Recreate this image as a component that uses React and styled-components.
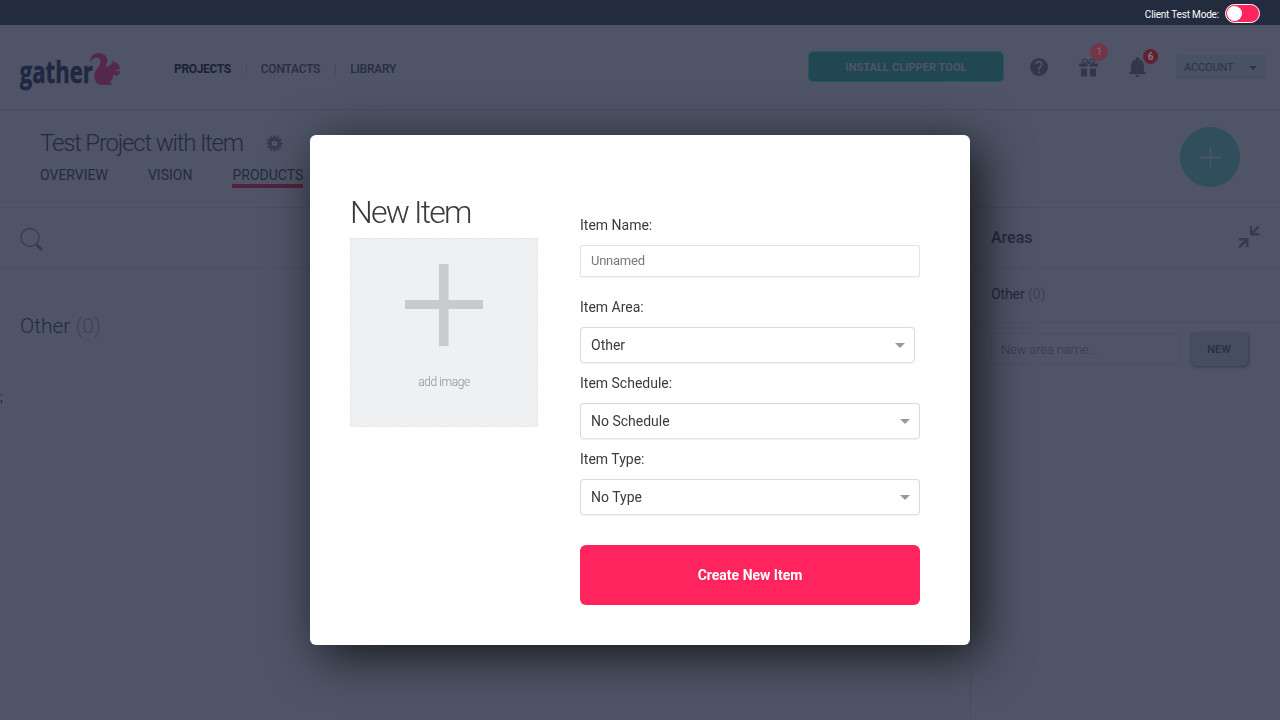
import React from "react";
import styled, { createGlobalStyle } from "styled-components";

const Global = createGlobalStyle`
  *, *::before, *::after { box-sizing: border-box; }
  body { margin: 0; background: #4f5567; font-family: Roboto, sans-serif; overflow: hidden; }
  button, input { font-family: inherit; margin: 0; }
`;

const Page = styled.div`
  width: 1280px;
  height: 720px;
  display: flex;
  flex-direction: column;
  background: #4f5567;
  color: #232b3e;
  overflow: hidden;
`;

const TestBar = styled.div`
  height: 25px;
  flex: none;
  display: flex;
  align-items: center;
  justify-content: flex-end;
  gap: 6px;
  padding: 2px 20px 0 0;
  background: #232b3e;
  color: #fff;
  font-size: 10px;
  letter-spacing: -0.18px;
`;

const TestLabel = styled.span`
  padding-top: 2px;
`;

const Toggle = styled.span`
  width: 35px;
  height: 19px;
  padding: 1px;
  border: 1px solid #fff;
  border-radius: 10px;
  background: #ff245e;
  &::before {
    content: "";
    display: block;
    width: 15px;
    height: 15px;
    border-radius: 50%;
    background: #fff;
  }
`;

const Header = styled.header`
  height: 85px;
  flex: none;
  display: flex;
  align-items: center;
  padding: 0 14px 0 20px;
  border-bottom: 1px solid #484e60;
`;

const Logo = styled.svg`
  width: 102px;
  height: 42px;
  margin-top: 7px;
`;

const Nav = styled.nav`
  display: flex;
  align-items: center;
  margin: 3px auto 0 52px;
  font-size: 12px;
`;

const NavLink = styled.a`
  color: ${(p) => (p.$active ? "#1a2135" : "#272e41")};
  font-weight: ${(p) => (p.$active ? 700 : 500)};
  letter-spacing: ${(p) => (p.$active ? "-0.35px" : "-0.23px")};
  & + & {
    margin-left: 15px;
    padding-left: 15px;
    background: linear-gradient(#454b5d, #454b5d) 0 2px / 1px 11px no-repeat;
  }
`;

const ClipperButton = styled.button`
  width: 196px;
  height: 31px;
  margin: -1px 26px 0 0;
  padding: 1px 0 0;
  border: 1px solid #27565c;
  border-radius: 5px;
  background: #214852;
  color: #4f5567;
  font-size: 11px;
  font-weight: 700;
  letter-spacing: 0.06px;
`;

const HeaderIcon = styled.span`
  position: relative;
  display: flex;
  margin-right: ${(p) => p.$gap}px;
  color: #323849;
`;

const Badge = styled.span`
  position: absolute;
  left: ${(p) => p.$left}px;
  top: ${(p) => p.$top}px;
  width: ${(p) => p.$size}px;
  height: ${(p) => p.$size}px;
  display: flex;
  align-items: center;
  justify-content: center;
  border-radius: 50%;
  background: ${(p) => p.$color};
  color: ${(p) => p.$text};
  font-size: 10px;
  font-weight: 700;
`;

const Account = styled.button`
  width: 90px;
  height: 24px;
  display: flex;
  align-items: center;
  justify-content: space-between;
  padding: 1px 9px 0 8px;
  border: 0;
  border-radius: 2px;
  background: #495164;
  color: #2b3346;
  font-size: 11px;
  letter-spacing: -0.15px;
`;

const ProjectBar = styled.section`
  height: 98px;
  flex: none;
  display: flex;
  align-items: flex-start;
  justify-content: space-between;
  padding: 17px 40px 0 40px;
  border-bottom: 1px solid #495062;
`;

const TitleRow = styled.div`
  display: flex;
  align-items: center;
  gap: 23px;
  height: 33px;
`;

const Title = styled.h1`
  margin: 0;
  font-size: 24px;
  font-weight: 300;
  line-height: 33px;
  letter-spacing: -1.2px;
`;

const Tabs = styled.div`
  display: flex;
  gap: 40px;
  margin-top: 6px;
`;

const Tab = styled.a`
  height: 22px;
  font-size: 14px;
  line-height: 18px;
  border-bottom: 4px solid ${(p) => (p.$active ? "#54213a" : "transparent")};
`;

const AddButton = styled.button`
  width: 60px;
  height: 60px;
  display: flex;
  align-items: center;
  justify-content: center;
  padding: 0;
  border: 0;
  border-radius: 50%;
  background: #304e5b;
  color: #4b5768;
`;

const Body = styled.div`
  flex: 1;
  display: grid;
  grid-template-columns: 970px 310px;
`;

const Products = styled.main`
  display: flex;
  flex-direction: column;
`;

const SearchBar = styled.div`
  height: 60px;
  padding: 19px 20px 0;
  border-bottom: 1px solid #495163;
`;

const GroupTitle = styled.h2`
  margin: 44px 0 0 20px;
  font-size: 21px;
  font-weight: 300;
  line-height: 28px;
`;

const Count = styled.span`
  color: #3b4255;
`;

const Stray = styled.div`
  margin-top: 49px;
  font-size: 14px;
  line-height: 16px;
`;

const Sidebar = styled.aside`
  border-left: 1px solid #494f61;
`;

const SideHeader = styled.div`
  height: 60px;
  display: flex;
  align-items: center;
  justify-content: space-between;
  padding: 0 20px 1px;
  border-bottom: 1px solid #495163;
  font-size: 16px;
  font-weight: 500;
`;

const SideRow = styled.div`
  height: 55px;
  padding: 0 20px;
  border-bottom: 1px solid #495163;
  font-size: 14px;
  font-weight: 400;
  line-height: 53px;
  letter-spacing: -0.1px;
`;

const NewArea = styled.form`
  display: flex;
  gap: 9px;
  padding: 9px 20px;
`;

const AreaInput = styled.input`
  width: 190px;
  height: 32px;
  margin-top: 1px;
  padding: 0 9px;
  border: 1px solid #4a5062;
  border-radius: 2px;
  background: transparent;
  font-size: 13px;
  font-weight: 300;
  letter-spacing: -0.15px;
  &::placeholder { color: #333a4c; opacity: 1; }
`;

const NewButton = styled.button`
  width: 58px;
  height: 34px;
  padding: 0;
  border: 0;
  border-radius: 5px;
  background: #474d60;
  box-shadow: 1px 1px 3px #353b4d;
  color: #2b3347;
  font-size: 11px;
  font-weight: 700;
`;

const Overlay = styled.div`
  position: fixed;
  inset: 0;
  display: grid;
  justify-items: center;
  align-items: start;
  padding-top: 135px;
`;

const Dialog = styled.div`
  width: 660px;
  height: 510px;
  display: grid;
  grid-template-columns: 188px 340px;
  column-gap: 42px;
  align-content: start;
  padding: 60px 50px 40px 40px;
  border-radius: 6px;
  background: #fff;
  box-shadow: 10px 10px 50px rgba(0, 0, 0, 0.75);
  color: #3a3b3f;
`;

const DialogTitle = styled.h2`
  margin: 0 0 8px;
  font-size: 32px;
  font-weight: 300;
  line-height: 35px;
  letter-spacing: -1.8px;
`;

const ImageDrop = styled.div`
  width: 188px;
  height: 189px;
  display: flex;
  flex-direction: column;
  align-items: center;
  padding-top: 25px;
  border: 1px dashed #e5e6e8;
  background: #eff0f2;
  color: #8f9092;
  font-size: 12px;
  font-weight: 300;
  line-height: 16px;
  letter-spacing: -0.4px;
  svg { margin-bottom: 27px; }
`;

const Fields = styled.div`
  display: flex;
  flex-direction: column;
`;

const Field = styled.label`
  display: block;
  height: ${(p) => p.$height}px;
  padding-top: ${(p) => p.$top}px;
  font-size: 14px;
  line-height: 20px;
`;

const NameInput = styled.input`
  display: block;
  width: 340px;
  height: 32px;
  margin-top: 10px;
  padding: 0 10px 1px;
  border: 1px solid #e4e4e4;
  border-radius: 2px;
  color: #37383c;
  font-size: 13px;
  letter-spacing: -0.25px;
  box-shadow: 0 1px 0 #f6f6f6;
  &::placeholder { color: #77787b; opacity: 1; }
`;

const Select = styled.span`
  width: ${(p) => p.$width}px;
  height: 36px;
  margin-top: 10px;
  display: flex;
  align-items: center;
  justify-content: space-between;
  padding: 0 9px 0 10px;
  border: 1px solid #d9d9d9;
  border-bottom-color: #e2e2e2;
  border-radius: 4px;
  box-shadow: 0 1px 0 #f2f2f2;
`;

const Caret = styled.i`
  border: ${(p) => p.$size}px solid transparent;
  border-top-color: ${(p) => p.$color};
  border-bottom: 0;
`;

const CreateButton = styled.button`
  width: 340px;
  height: 60px;
  margin-top: 30px;
  border: 0;
  border-radius: 6px;
  background: #ff245e;
  color: #fff;
  font-size: 14px;
  font-weight: 700;
`;

const TOOTH_ANGLES = [0, 30, 60, 90, 120, 150];

function Gear() {
  return (
    <svg width="17" height="17" viewBox="-8.5 -8.5 17 17">
      <g fill="#363d50">
        {TOOTH_ANGLES.map((a) => (
          <rect key={a} x="-1.2" y="-8" width="2.4" height="16" transform={`rotate(${a})`} />
        ))}
        <circle r="5.6" />
      </g>
      <circle r="2.8" fill="#4f5567" />
    </svg>
  );
}

function GatherLogo() {
  return (
    <Logo viewBox="20 50 102 42">
      <text x="19.8" y="82.6" fontFamily="Open Sans, sans-serif" fontWeight="700" fontSize="29.5" textLength="73" lengthAdjust="spacingAndGlyphs" fill="#202740" stroke="#202740" strokeWidth=".6">gather</text>
      <path
        transform="translate(0 30) scale(.33333)"
        fill="#54284c"
        d="M270 97C270 80 280 69 296 69C313 69 323 80 322 94C321 101 315 106 317 110C321 111 325 109 330 106C335 103 338 95 340 90L344 97C351 99 356 102 357 108L361 115C359 119 353 119 347 121L347 124L359 123L360 127L357 134L348 137L339 133C341 143 337 151 328 157C334 157 336 161 335 165L307 165C293 164 284 155 283 141C281 119 304 108 301 91C299 81 286 82 280 86C275 90 274 93 270 97Z"
      />
    </Logo>
  );
}

export default function App() {
  return (
    <>
      <Global />
      <Page>
        <TestBar><TestLabel>Client Test Mode:</TestLabel><Toggle /></TestBar>
        <Header>
          <GatherLogo />
          <Nav>
            <NavLink $active>PROJECTS</NavLink>
            <NavLink>CONTACTS</NavLink>
            <NavLink>LIBRARY</NavLink>
          </Nav>
          <ClipperButton>INSTALL CLIPPER TOOL</ClipperButton>
          <HeaderIcon $gap={31}>
            <svg width="18" height="18" viewBox="2 2 20 20" fill="currentColor">
              <path d="M12 2a10 10 0 1 0 0 20 10 10 0 0 0 0-20zm1 17h-2v-2h2zm2.07-7.75-.9.92C13.45 12.9 13 13.5 13 15h-2v-.5c0-1.1.45-2.1 1.17-2.83l1.24-1.26c.37-.36.59-.86.59-1.41a2 2 0 1 0-4 0H8a4 4 0 1 1 8 0c0 .88-.36 1.68-.93 2.25z" />
            </svg>
          </HeaderIcon>
          <HeaderIcon $gap={31}>
            <svg width="19" height="19" viewBox="0 0 19 19" fill="currentColor">
              <path d="M0 5.5H8.5V8.500H0zM10.5 5.5H19V8.500H10.5zM2 10.500H8V18.500H2zM11 10.500H17V18.500H11z" />
              <path d="M9.5 5.1C7 5.3 3 5.1 3.4 2.5C4 -.1 8.5 .7 9.5 5.1C10.500 .7 15 -.1 15.600 2.500C16 5.100 12 5.300 9.500 5.100Z" fill="none" stroke="currentColor" strokeWidth="1.2" />
            </svg>
            <Badge $left={11} $top={-15} $size={18} $color="#713649" $text="#8a5b6a">1</Badge>
          </HeaderIcon>
          <HeaderIcon $gap={30}>
            <svg width="17" height="20" viewBox="4 2.500 16 19.500" preserveAspectRatio="none" fill="currentColor">
              <path d="M12 22a2 2 0 0 0 2-2h-4a2 2 0 0 0 2 2zm6-6v-5c0-3.070-1.640-5.640-4.500-6.320V4a1.500 1.500 0 0 0-3 0v.680C7.630 5.360 6 7.920 6 11v5l-2 2v1h16v-1z" />
            </svg>
            <Badge $left={14} $top={-8} $size={15} $color="#622034" $text="#817485">6</Badge>
          </HeaderIcon>
          <Account>ACCOUNT <Caret $size={4} $color="#2b3346" /></Account>
        </Header>

        <ProjectBar>
          <div>
            <TitleRow>
              <Title>Test Project with Item</Title>
              <Gear />
            </TitleRow>
            <Tabs>
              <Tab>OVERVIEW</Tab>
              <Tab>VISION</Tab>
              <Tab $active>PRODUCTS</Tab>
            </Tabs>
          </div>
          <AddButton>
            <svg width="21" height="21" viewBox="0 0 21 21" stroke="currentColor" strokeWidth="1.400">
              <path d="M10.500 0V21M0 10.500H21" />
            </svg>
          </AddButton>
        </ProjectBar>

        <Body>
          <Products>
            <SearchBar>
              <svg width="24" height="24" viewBox="0 0 24 24" fill="none" stroke="#343c4f">
                <circle cx="10" cy="10.500" r="9" strokeWidth="1.300" />
                <path d="M16 17L22 23" strokeWidth="2.600" />
              </svg>
            </SearchBar>
            <GroupTitle>Other <Count>(0)</Count></GroupTitle>
            <Stray>;</Stray>
          </Products>
          <Sidebar>
            <SideHeader>
              Areas
              <svg width="22" height="22" viewBox="0 0 22 22" fill="#343c4f">
                <path d="M12 0H14V5.500L19.500 0L21.500 1.500L16 7H21.500V9.500H12zM1 12H10.500V21H8V16.500L2 22L.300 20.500L6 14.500H1z" />
              </svg>
            </SideHeader>
            <SideRow>Other <Count>(0)</Count></SideRow>
            <NewArea>
              <AreaInput placeholder="New area name..." />
              <NewButton type="button">NEW</NewButton>
            </NewArea>
          </Sidebar>
        </Body>
      </Page>

      <Overlay>
        <Dialog>
          <div>
            <DialogTitle>New Item</DialogTitle>
            <ImageDrop>
              <svg width="78" height="83" viewBox="0 0 78 83" fill="#c9cacc">
                <path d="M34 0H43.500V36H78V45H43.500V82H34V45H0V36H34z" />
              </svg>
              add image
            </ImageDrop>
          </div>
          <Fields>
            <Field $height={92} $top={20}>Item Name:<NameInput placeholder="Unnamed" /></Field>
            <Field $height={86} $top={10}>Item Area:<Select $width={335}>Other<Caret $size={5} $color="#999" /></Select></Field>
            <Field $height={76} $top={0}>Item Schedule:<Select $width={340}>No Schedule<Caret $size={5} $color="#999" /></Select></Field>
            <Field $height={66} $top={0}>Item Type:<Select $width={340}>No Type<Caret $size={5} $color="#999" /></Select></Field>
            <CreateButton>Create New Item</CreateButton>
          </Fields>
        </Dialog>
      </Overlay>
    </>
  );
}
